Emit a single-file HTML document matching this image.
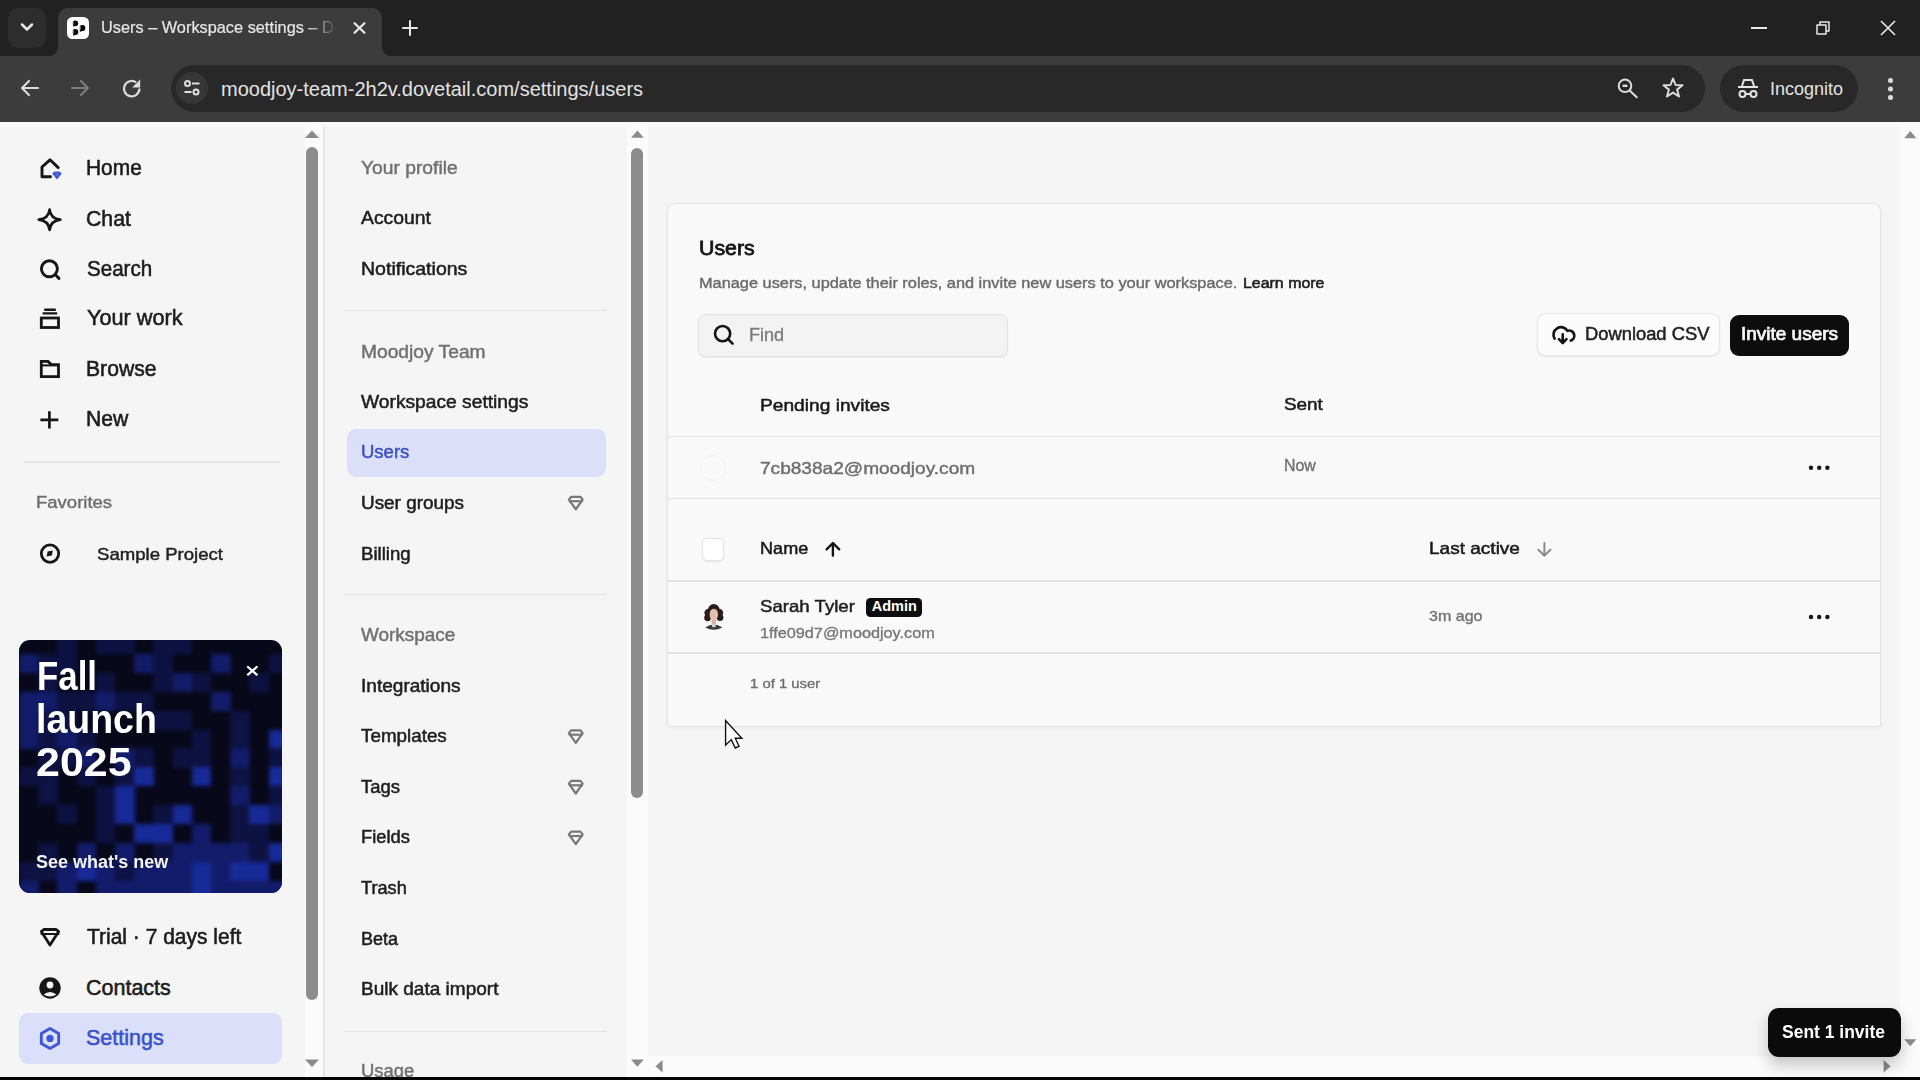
<!DOCTYPE html>
<html><head><meta charset="utf-8">
<style>
*{box-sizing:border-box;margin:0;padding:0}
html,body{width:1920px;height:1080px;overflow:hidden;background:#f5f5f5;font-family:"Liberation Sans",sans-serif;position:relative}
.a{position:absolute}
.t{position:absolute;white-space:nowrap;line-height:1}
#tabbar{left:0;top:0;width:1920px;height:56px;background:#212121}
#toolbar{left:0;top:56px;width:1920px;height:66px;background:#3c3c3c}
</style></head>
<body>
<!-- ============ BROWSER CHROME ============ -->
<div id="tabbar" class="a"></div>
<div class="a" style="left:8px;top:8px;width:38px;height:40px;border-radius:10px;background:#2d2d2d"></div>
<svg class="a" style="left:19px;top:21px" width="16" height="12" viewBox="0 0 16 12"><path d="M3 3.5 L8 8.5 L13 3.5" fill="none" stroke="#e8e8e8" stroke-width="2.5" stroke-linecap="round" stroke-linejoin="round"/></svg>
<!-- active tab -->
<div class="a" style="left:58px;top:8px;width:324px;height:48px;background:#3c3c3c;border-radius:10px 10px 0 0"></div>
<div class="a" style="left:48px;top:46px;width:10px;height:10px;background:radial-gradient(circle at 0 0,#212121 10px,#3c3c3c 10.5px)"></div>
<div class="a" style="left:382px;top:46px;width:10px;height:10px;background:radial-gradient(circle at 100% 0,#212121 10px,#3c3c3c 10.5px)"></div>
<div class="a" style="left:67px;top:16.8px;width:22.4px;height:22.4px;background:#fff;border-radius:5.5px"></div>
<svg class="a" style="left:60px;top:10px" width="36" height="36" viewBox="60 10 36 36"><g fill="#0a0a0a"><circle cx="75.3" cy="23.3" r="2.9"/><path d="M72.5 23.6 L73.2 26.6 L75.6 26.1Z"/><circle cx="82.3" cy="28" r="3.1"/><path d="M79.3 28.4 L80 31.8 L82.4 31.1Z"/><circle cx="75.3" cy="31.9" r="3"/><path d="M72.4 32.3 L73.6 35.8 L75.8 34.8Z"/></g><path d="M72.6 21.5 Q73.4 23.5 72.6 25.5" stroke="#fff" stroke-width="1.1" fill="none"/><path d="M79.6 26 Q80.4 28 79.6 30" stroke="#fff" stroke-width="1.1" fill="none"/><path d="M72.6 30 Q73.4 32 72.6 34" stroke="#fff" stroke-width="1.1" fill="none"/></svg>
<div class="a" style="left:100px;top:14px;width:236px;height:28px;overflow:hidden;-webkit-mask-image:linear-gradient(90deg,#000 205px,rgba(0,0,0,0.35) 228px,transparent 236px)"><div class="t" style="left:1px;top:5px;font-size:17px;color:#e6e6e6;transform:scaleX(0.96);transform-origin:0 0;-webkit-text-stroke:0.2px #e6e6e6">Users – Workspace settings – Dovetail</div></div>
<svg class="a" style="left:351px;top:20px" width="16" height="16" viewBox="0 0 16 16"><path d="M3.5 3.2 L13.5 12.8 M13.5 3.2 L3.5 12.8" stroke="#e8e8e8" stroke-width="2.2" stroke-linecap="round"/></svg>
<svg class="a" style="left:401px;top:19px" width="18" height="18" viewBox="0 0 18 18"><path d="M9 2 V16 M2 9 H16" stroke="#e8e8e8" stroke-width="2" stroke-linecap="round"/></svg>
<!-- window controls -->
<div class="a" style="left:1751px;top:27px;width:16px;height:1.5px;background:#e8e8e8"></div>
<svg class="a" style="left:1814px;top:19px" width="18" height="18" viewBox="0 0 18 18"><path d="M3 6 H12 V15 H3 Z M6 6 V3 H15 V12 H12" fill="none" stroke="#e8e8e8" stroke-width="1.5" stroke-linejoin="round"/></svg>
<svg class="a" style="left:1879px;top:19px" width="18" height="18" viewBox="0 0 18 18"><path d="M2 2 L16 16 M16 2 L2 16" stroke="#e8e8e8" stroke-width="1.6"/></svg>
<div id="toolbar" class="a"></div>
<svg class="a" style="left:18px;top:76px" width="24" height="24" viewBox="0 0 24 24"><path d="M20 12 H5 M11 5 L4 12 L11 19" fill="none" stroke="#dcdcdc" stroke-width="2.2" stroke-linecap="round" stroke-linejoin="round"/></svg>
<svg class="a" style="left:68px;top:76px" width="24" height="24" viewBox="0 0 24 24"><path d="M4 12 H19 M13 5 L20 12 L13 19" fill="none" stroke="#7d7d7d" stroke-width="2.2" stroke-linecap="round" stroke-linejoin="round"/></svg>
<svg class="a" style="left:116px;top:74px" width="30" height="30" viewBox="116 74 30 30"><path d="M139.4 88.6 A7.7 7.7 0 1 1 136.2 82.4" fill="none" stroke="#dcdcdc" stroke-width="2.2" stroke-linecap="butt"/><path d="M140.2 79.6 V87.6 H132.2 Z" fill="#dcdcdc"/></svg>
<div class="a" style="left:171px;top:64.5px;width:1534px;height:47px;border-radius:23.5px;background:#282828"></div>
<div class="a" style="left:176px;top:72px;width:32px;height:32px;border-radius:16px;background:#363636"></div>
<svg class="a" style="left:180px;top:76px" width="24" height="24" viewBox="0 0 24 24"><g fill="none" stroke="#e0e0e0" stroke-width="2"><circle cx="7.5" cy="7.5" r="2.5"/><circle cx="16" cy="16" r="2.5"/><path d="M12 7.5 H19.5 M4.5 16 H11.5"/></g></svg>
<div class="t" style="left:221px;top:79px;font-size:20px;color:#e3e3e3">moodjoy-team-2h2v.dovetail.com/settings/users</div>
<svg class="a" style="left:1610px;top:72px" width="34" height="34" viewBox="1610 72 34 34"><g fill="none" stroke="#dcdcdc" stroke-width="2"><circle cx="1625" cy="85.8" r="6.3"/><path d="M1629.6 90.4 L1636.8 97.2" stroke-linecap="round"/><path d="M1622.6 85.8 H1627.4" stroke-width="2.4"/></g></svg>
<svg class="a" style="left:1661px;top:76px" width="24" height="24" viewBox="0 0 24 24"><path d="M12 2.5 L14.6 9 L21.5 9.3 L16.1 13.6 L18 20.5 L12 16.6 L6 20.5 L7.9 13.6 L2.5 9.3 L9.4 9 Z" fill="none" stroke="#dcdcdc" stroke-width="2" stroke-linejoin="round"/></svg>
<div class="a" style="left:1720px;top:64.5px;width:138px;height:47px;border-radius:23.5px;background:#282828"></div>
<svg class="a" style="left:1736px;top:77px" width="24" height="24" viewBox="0 0 24 24"><g fill="none" stroke="#e3e3e3" stroke-width="2"><path d="M6 9 L8 3 H16 L18 9" /><path d="M2 10 H22"/><circle cx="6.5" cy="17" r="3"/><circle cx="17.5" cy="17" r="3"/><path d="M9.5 17 H14.5"/></g></svg>
<div class="t" style="left:1770px;top:80px;font-size:18px;color:#e3e3e3">Incognito</div>
<div class="a" style="left:1888px;top:78px;width:4.5px;height:4.5px;border-radius:50%;background:#dcdcdc;box-shadow:0 8.5px 0 #dcdcdc,0 17px 0 #dcdcdc"></div>


<!-- ============ LEFT SIDEBAR ============ -->
<div class="a" style="left:0;top:122px;width:305px;height:955px;background:#f5f5f5"></div>
<div class="a" style="left:24px;top:461px;width:256px;height:2px;background:#e4e4e4"></div>
<div class="a" style="left:19px;top:1013px;width:263px;height:51px;border-radius:9px;background:#dcdff9"></div>
<svg class="a" style="left:0;top:0" width="330" height="1080" viewBox="0 0 330 1080">
<g fill="none" stroke="#161616" stroke-width="2.9" stroke-linejoin="round" stroke-linecap="round">
<path d="M50.5 176.7 H42 V167 L50 159.8 L58.2 167.6"/>
<path d="M49.6 209.6 Q50.6 218.6 60.4 219.6 Q50.6 220.6 49.6 229.8 Q48.6 220.6 38.8 219.6 Q48.6 218.6 49.6 209.6 Z" stroke-width="2.7"/>
<circle cx="49.4" cy="268.8" r="8"/>
<path d="M55.4 274.8 L59 278.4"/>
<rect x="41.3" y="318" width="17.2" height="9.5" stroke-linejoin="miter" stroke-linecap="butt" stroke-width="2.8"/>
<path d="M42.6 313.4 H57.2 M44.2 309.7 H55.8" stroke-linecap="butt" stroke-width="2.4"/>
<path d="M41.3 361.4 H48 L51.2 364.6 H58.5 V376.7 H41.3 Z" stroke-linejoin="miter" stroke-width="2.8"/>
<path d="M41.2 365.4 H58.6" stroke-width="2" stroke-linecap="butt"/>
<path d="M49.4 411.2 V428.4 M40.4 419.8 H58.4" stroke-linecap="butt" stroke-width="2.7"/>
<circle cx="50" cy="553.6" r="8.7" stroke-width="2.8"/>
<path d="M41.3 931.6 L43.8 929.5 H56.2 L58.7 931.6 L50 945 Z" stroke-width="2.8"/>
<path d="M41.5 934 H58.5" stroke-width="2.2"/>
</g>
<path d="M53 173.6 L54.6 172.2 H59.4 L61 173.6 L57 178.6 Z" fill="#3f5ad6" stroke="#3f5ad6" stroke-width="1.2" stroke-linejoin="round"/>
<path d="M56 174.3 H58 L57 175.8 Z" fill="#8fa0ee"/>
<path d="M46.6 556.6 L47.6 551.6 L52.8 550.6 L51.8 555.6 Z" fill="#161616"/>
<circle cx="50" cy="988" r="10.7" fill="#161616"/>
<circle cx="50" cy="985" r="3.4" fill="#f5f5f5"/>
<path d="M43.6 994.6 Q50 989.2 56.4 994.6 Q50 998.6 43.6 994.6 Z" fill="#f5f5f5"/>
<path d="M50 1028.4 L58.66 1033.4 V1043.4 L50 1048.4 L41.34 1043.4 V1033.4 Z" fill="none" stroke="#3f57d6" stroke-width="2.9" stroke-linejoin="round"/>
<circle cx="50" cy="1038.4" r="3.6" fill="#3f57d6"/>
</svg>
<div class="a" style="left:19px;top:640px;width:263px;height:253px;border-radius:11px;overflow:hidden;background:#08081a"><div class="a" style="left:0;top:0;width:263px;height:253px;filter:blur(2px)">
<div class="a" style="left:38.4px;top:-5.0px;width:19.5px;height:19.2px;background:#0e1242"></div>
<div class="a" style="left:76.8px;top:-5.0px;width:19.5px;height:19.2px;background:#0e1242"></div>
<div class="a" style="left:96.0px;top:-5.0px;width:19.5px;height:19.2px;background:#0e1242"></div>
<div class="a" style="left:134.4px;top:-5.0px;width:19.5px;height:19.2px;background:#0e1242"></div>
<div class="a" style="left:153.6px;top:-5.0px;width:19.5px;height:19.2px;background:#0e1242"></div>
<div class="a" style="left:0.0px;top:13.9px;width:19.5px;height:19.2px;background:#121c6a"></div>
<div class="a" style="left:19.2px;top:13.9px;width:19.5px;height:19.2px;background:#0e1242"></div>
<div class="a" style="left:38.4px;top:13.9px;width:19.5px;height:19.2px;background:#0e1242"></div>
<div class="a" style="left:115.2px;top:13.9px;width:19.5px;height:19.2px;background:#121c6a"></div>
<div class="a" style="left:134.4px;top:13.9px;width:19.5px;height:19.2px;background:#0e1242"></div>
<div class="a" style="left:192.0px;top:13.9px;width:19.5px;height:19.2px;background:#121c6a"></div>
<div class="a" style="left:249.6px;top:13.9px;width:19.5px;height:19.2px;background:#0e1242"></div>
<div class="a" style="left:19.2px;top:32.8px;width:19.5px;height:19.2px;background:#0e1242"></div>
<div class="a" style="left:76.8px;top:32.8px;width:19.5px;height:19.2px;background:#0e1242"></div>
<div class="a" style="left:134.4px;top:32.8px;width:19.5px;height:19.2px;background:#0e1242"></div>
<div class="a" style="left:153.6px;top:32.8px;width:19.5px;height:19.2px;background:#121c6a"></div>
<div class="a" style="left:172.8px;top:32.8px;width:19.5px;height:19.2px;background:#0e1242"></div>
<div class="a" style="left:230.4px;top:32.8px;width:19.5px;height:19.2px;background:#0e1242"></div>
<div class="a" style="left:0.0px;top:51.7px;width:19.5px;height:19.2px;background:#121c6a"></div>
<div class="a" style="left:19.2px;top:51.7px;width:19.5px;height:19.2px;background:#121c6a"></div>
<div class="a" style="left:38.4px;top:51.7px;width:19.5px;height:19.2px;background:#0e1242"></div>
<div class="a" style="left:57.6px;top:51.7px;width:19.5px;height:19.2px;background:#0e1242"></div>
<div class="a" style="left:76.8px;top:51.7px;width:19.5px;height:19.2px;background:#121c6a"></div>
<div class="a" style="left:96.0px;top:51.7px;width:19.5px;height:19.2px;background:#0e1242"></div>
<div class="a" style="left:115.2px;top:51.7px;width:19.5px;height:19.2px;background:#0e1242"></div>
<div class="a" style="left:192.0px;top:51.7px;width:19.5px;height:19.2px;background:#121c6a"></div>
<div class="a" style="left:0.0px;top:70.6px;width:19.5px;height:19.2px;background:#121c6a"></div>
<div class="a" style="left:19.2px;top:70.6px;width:19.5px;height:19.2px;background:#0e1242"></div>
<div class="a" style="left:38.4px;top:70.6px;width:19.5px;height:19.2px;background:#0e1242"></div>
<div class="a" style="left:134.4px;top:70.6px;width:19.5px;height:19.2px;background:#0e1242"></div>
<div class="a" style="left:153.6px;top:70.6px;width:19.5px;height:19.2px;background:#0e1242"></div>
<div class="a" style="left:211.2px;top:70.6px;width:19.5px;height:19.2px;background:#0e1242"></div>
<div class="a" style="left:0.0px;top:89.5px;width:19.5px;height:19.2px;background:#121c6a"></div>
<div class="a" style="left:19.2px;top:89.5px;width:19.5px;height:19.2px;background:#0e1242"></div>
<div class="a" style="left:38.4px;top:89.5px;width:19.5px;height:19.2px;background:#121c6a"></div>
<div class="a" style="left:57.6px;top:89.5px;width:19.5px;height:19.2px;background:#0e1242"></div>
<div class="a" style="left:172.8px;top:89.5px;width:19.5px;height:19.2px;background:#0e1242"></div>
<div class="a" style="left:211.2px;top:89.5px;width:19.5px;height:19.2px;background:#0e1242"></div>
<div class="a" style="left:249.6px;top:89.5px;width:19.5px;height:19.2px;background:#172a98"></div>
<div class="a" style="left:19.2px;top:108.4px;width:19.5px;height:19.2px;background:#0e1242"></div>
<div class="a" style="left:38.4px;top:108.4px;width:19.5px;height:19.2px;background:#0e1242"></div>
<div class="a" style="left:57.6px;top:108.4px;width:19.5px;height:19.2px;background:#121c6a"></div>
<div class="a" style="left:96.0px;top:108.4px;width:19.5px;height:19.2px;background:#121c6a"></div>
<div class="a" style="left:115.2px;top:108.4px;width:19.5px;height:19.2px;background:#0e1242"></div>
<div class="a" style="left:153.6px;top:108.4px;width:19.5px;height:19.2px;background:#0e1242"></div>
<div class="a" style="left:172.8px;top:108.4px;width:19.5px;height:19.2px;background:#0e1242"></div>
<div class="a" style="left:211.2px;top:108.4px;width:19.5px;height:19.2px;background:#121c6a"></div>
<div class="a" style="left:249.6px;top:108.4px;width:19.5px;height:19.2px;background:#0e1242"></div>
<div class="a" style="left:0.0px;top:127.3px;width:19.5px;height:19.2px;background:#0e1242"></div>
<div class="a" style="left:19.2px;top:127.3px;width:19.5px;height:19.2px;background:#0e1242"></div>
<div class="a" style="left:57.6px;top:127.3px;width:19.5px;height:19.2px;background:#0e1242"></div>
<div class="a" style="left:96.0px;top:127.3px;width:19.5px;height:19.2px;background:#0e1242"></div>
<div class="a" style="left:115.2px;top:127.3px;width:19.5px;height:19.2px;background:#172a98"></div>
<div class="a" style="left:172.8px;top:127.3px;width:19.5px;height:19.2px;background:#172a98"></div>
<div class="a" style="left:211.2px;top:127.3px;width:19.5px;height:19.2px;background:#0e1242"></div>
<div class="a" style="left:249.6px;top:127.3px;width:19.5px;height:19.2px;background:#172a98"></div>
<div class="a" style="left:19.2px;top:146.2px;width:19.5px;height:19.2px;background:#0e1242"></div>
<div class="a" style="left:76.8px;top:146.2px;width:19.5px;height:19.2px;background:#0e1242"></div>
<div class="a" style="left:96.0px;top:146.2px;width:19.5px;height:19.2px;background:#172a98"></div>
<div class="a" style="left:211.2px;top:146.2px;width:19.5px;height:19.2px;background:#121c6a"></div>
<div class="a" style="left:249.6px;top:146.2px;width:19.5px;height:19.2px;background:#0e1242"></div>
<div class="a" style="left:38.4px;top:165.1px;width:19.5px;height:19.2px;background:#0e1242"></div>
<div class="a" style="left:76.8px;top:165.1px;width:19.5px;height:19.2px;background:#0e1242"></div>
<div class="a" style="left:96.0px;top:165.1px;width:19.5px;height:19.2px;background:#172a98"></div>
<div class="a" style="left:134.4px;top:165.1px;width:19.5px;height:19.2px;background:#0e1242"></div>
<div class="a" style="left:153.6px;top:165.1px;width:19.5px;height:19.2px;background:#172a98"></div>
<div class="a" style="left:211.2px;top:165.1px;width:19.5px;height:19.2px;background:#0e1242"></div>
<div class="a" style="left:230.4px;top:165.1px;width:19.5px;height:19.2px;background:#172a98"></div>
<div class="a" style="left:249.6px;top:165.1px;width:19.5px;height:19.2px;background:#121c6a"></div>
<div class="a" style="left:76.8px;top:184.0px;width:19.5px;height:19.2px;background:#0e1242"></div>
<div class="a" style="left:115.2px;top:184.0px;width:19.5px;height:19.2px;background:#172a98"></div>
<div class="a" style="left:134.4px;top:184.0px;width:19.5px;height:19.2px;background:#172a98"></div>
<div class="a" style="left:172.8px;top:184.0px;width:19.5px;height:19.2px;background:#121c6a"></div>
<div class="a" style="left:211.2px;top:184.0px;width:19.5px;height:19.2px;background:#0e1242"></div>
<div class="a" style="left:230.4px;top:184.0px;width:19.5px;height:19.2px;background:#0e1242"></div>
<div class="a" style="left:19.2px;top:202.9px;width:19.5px;height:19.2px;background:#0e1242"></div>
<div class="a" style="left:57.6px;top:202.9px;width:19.5px;height:19.2px;background:#121c6a"></div>
<div class="a" style="left:96.0px;top:202.9px;width:19.5px;height:19.2px;background:#121c6a"></div>
<div class="a" style="left:134.4px;top:202.9px;width:19.5px;height:19.2px;background:#0e1242"></div>
<div class="a" style="left:153.6px;top:202.9px;width:19.5px;height:19.2px;background:#121c6a"></div>
<div class="a" style="left:172.8px;top:202.9px;width:19.5px;height:19.2px;background:#121c6a"></div>
<div class="a" style="left:192.0px;top:202.9px;width:19.5px;height:19.2px;background:#121c6a"></div>
<div class="a" style="left:211.2px;top:202.9px;width:19.5px;height:19.2px;background:#121c6a"></div>
<div class="a" style="left:230.4px;top:202.9px;width:19.5px;height:19.2px;background:#0e1242"></div>
<div class="a" style="left:249.6px;top:202.9px;width:19.5px;height:19.2px;background:#172a98"></div>
<div class="a" style="left:0.0px;top:221.8px;width:19.5px;height:19.2px;background:#0e1242"></div>
<div class="a" style="left:19.2px;top:221.8px;width:19.5px;height:19.2px;background:#0e1242"></div>
<div class="a" style="left:38.4px;top:221.8px;width:19.5px;height:19.2px;background:#121c6a"></div>
<div class="a" style="left:57.6px;top:221.8px;width:19.5px;height:19.2px;background:#172a98"></div>
<div class="a" style="left:76.8px;top:221.8px;width:19.5px;height:19.2px;background:#121c6a"></div>
<div class="a" style="left:96.0px;top:221.8px;width:19.5px;height:19.2px;background:#0e1242"></div>
<div class="a" style="left:115.2px;top:221.8px;width:19.5px;height:19.2px;background:#121c6a"></div>
<div class="a" style="left:134.4px;top:221.8px;width:19.5px;height:19.2px;background:#121c6a"></div>
<div class="a" style="left:153.6px;top:221.8px;width:19.5px;height:19.2px;background:#121c6a"></div>
<div class="a" style="left:172.8px;top:221.8px;width:19.5px;height:19.2px;background:#172a98"></div>
<div class="a" style="left:192.0px;top:221.8px;width:19.5px;height:19.2px;background:#121c6a"></div>
<div class="a" style="left:211.2px;top:221.8px;width:19.5px;height:19.2px;background:#172a98"></div>
<div class="a" style="left:230.4px;top:221.8px;width:19.5px;height:19.2px;background:#172a98"></div>
<div class="a" style="left:0.0px;top:240.7px;width:19.5px;height:19.2px;background:#121c6a"></div>
<div class="a" style="left:38.4px;top:240.7px;width:19.5px;height:19.2px;background:#121c6a"></div>
<div class="a" style="left:76.8px;top:240.7px;width:19.5px;height:19.2px;background:#121c6a"></div>
<div class="a" style="left:96.0px;top:240.7px;width:19.5px;height:19.2px;background:#121c6a"></div>
<div class="a" style="left:115.2px;top:240.7px;width:19.5px;height:19.2px;background:#121c6a"></div>
<div class="a" style="left:134.4px;top:240.7px;width:19.5px;height:19.2px;background:#121c6a"></div>
<div class="a" style="left:153.6px;top:240.7px;width:19.5px;height:19.2px;background:#121c6a"></div>
<div class="a" style="left:172.8px;top:240.7px;width:19.5px;height:19.2px;background:#172a98"></div>
<div class="a" style="left:192.0px;top:240.7px;width:19.5px;height:19.2px;background:#121c6a"></div>
<div class="a" style="left:211.2px;top:240.7px;width:19.5px;height:19.2px;background:#121c6a"></div>
<div class="a" style="left:230.4px;top:240.7px;width:19.5px;height:19.2px;background:#121c6a"></div>
<div class="a" style="left:249.6px;top:240.7px;width:19.5px;height:19.2px;background:#121c6a"></div>
</div></div>
<svg class="a" style="left:240px;top:660px" width="24" height="24" viewBox="240 660 24 24"><path d="M248 667 L256.7 674.6 M256.7 667 L248 674.6" stroke="#fff" stroke-width="2.3" stroke-linecap="round"/></svg>
<!-- scrollbar 1 -->
<div class="a" style="left:305px;top:122px;width:18px;height:955px;background:#fbfbfb"></div>
<svg class="a" style="left:304px;top:124px" width="18" height="18" viewBox="304 124 18 18"><path d="M305 138 L312 130.5 L319 138 Z" fill="#8a8a8a"/></svg>
<div class="a" style="left:306px;top:147px;width:12.4px;height:853px;border-radius:6.2px;background:#8c8c8c"></div>
<svg class="a" style="left:304px;top:1054px" width="18" height="18" viewBox="304 1054 18 18"><path d="M305 1059.5 L312 1067 L319 1059.5 Z" fill="#8a8a8a"/></svg>
<div class="a" style="left:323px;top:122px;width:2px;height:955px;background:#e4e4e4"></div>
<!-- ============ SETTINGS NAV ============ -->
<div class="a" style="left:325px;top:122px;width:302px;height:955px;background:#f5f5f5"></div>
<div class="a" style="left:344px;top:309.5px;width:263px;height:1.6px;background:#e3e3e3"></div>
<div class="a" style="left:344px;top:593.5px;width:263px;height:1.6px;background:#e3e3e3"></div>
<div class="a" style="left:344px;top:1030.5px;width:263px;height:1.6px;background:#e3e3e3"></div>
<div class="a" style="left:346.5px;top:428.8px;width:259px;height:48px;border-radius:9px;background:#dcdff9"></div>
<svg class="a" style="left:0;top:0" width="660" height="1080" viewBox="0 0 660 1080"><g fill="none" stroke="#787878" stroke-width="2.2" stroke-linejoin="round"><path d="M568.9 499.6 L571.2 496.8 H580.4 L582.7 499.6 L575.8 509.4 Z"/><path d="M568.8 501.2 H582.8"/><path d="M568.9 733.1 L571.2 730.3 H580.4 L582.7 733.1 L575.8 742.9 Z"/><path d="M568.8 734.7 H582.8"/><path d="M568.9 783.7 L571.2 780.9 H580.4 L582.7 783.7 L575.8 793.5 Z"/><path d="M568.8 785.3 H582.8"/><path d="M568.9 834.4 L571.2 831.6 H580.4 L582.7 834.4 L575.8 844.2 Z"/><path d="M568.8 836.0 H582.8"/></g></svg>
<div class="a" style="left:627px;top:122px;width:21px;height:955px;background:#fbfbfb"></div>
<svg class="a" style="left:626px;top:124px" width="22" height="18" viewBox="626 124 22 18"><path d="M631 137.8 L637.4 130.6 L643.8 137.8 Z" fill="#8a8a8a"/></svg>
<div class="a" style="left:631px;top:147.5px;width:12.4px;height:650px;border-radius:6.2px;background:#8c8c8c"></div>
<svg class="a" style="left:626px;top:1054px" width="22" height="18" viewBox="626 1054 22 18"><path d="M631 1059.5 L637.4 1066.7 L643.8 1059.5 Z" fill="#8a8a8a"/></svg>
<!-- ============ MAIN ============ -->
<div class="a" style="left:0;top:122px;width:1920px;height:5px;background:#f9f9f9"></div>
<div class="a" style="left:667px;top:202.5px;width:1214px;height:524px;border:1.5px solid #e3e3e3;border-radius:8px 8px 3px 3px;background:#f9f9f9;box-shadow:0 2px 4px rgba(0,0,0,0.035)"></div>
<!-- find input -->
<div class="a" style="left:697.5px;top:313.5px;width:310px;height:43px;border:1px solid #e2e2e2;border-radius:8px;background:#f3f3f3;box-shadow:0 1px 1.5px rgba(0,0,0,0.06)"></div>
<!-- download csv -->
<div class="a" style="left:1537px;top:312.7px;width:183px;height:43.8px;border:1px solid #e6e6e6;border-radius:8px;background:#fbfbfb;box-shadow:0 1px 2px rgba(0,0,0,0.08)"></div>
<!-- invite users -->
<div class="a" style="left:1730.2px;top:315.3px;width:118.5px;height:40.4px;border-radius:9px;background:#0d0d0d"></div>
<!-- rows -->
<div class="a" style="left:668px;top:435.7px;width:1212px;height:1.6px;background:#e2e2e2"></div>
<div class="a" style="left:668px;top:497.9px;width:1212px;height:1.6px;background:#e2e2e2"></div>
<div class="a" style="left:668px;top:580px;width:1212px;height:1.6px;background:#e2e2e2"></div>
<div class="a" style="left:668px;top:652.2px;width:1212px;height:1.6px;background:#e2e2e2"></div>
<div class="a" style="left:699.5px;top:454.5px;width:26px;height:26px;border-radius:50%;border:1.2px solid #efefef"></div>
<div class="a" style="left:701.7px;top:538.3px;width:22.5px;height:22.5px;border-radius:5px;border:1px solid #e3e3e3;background:#fff;box-shadow:0 1px 2px rgba(0,0,0,0.08)"></div>
<div class="a" style="left:865.8px;top:598px;width:56px;height:18.8px;border-radius:4.5px;background:#0d0d0d"></div>
<svg class="a" style="left:640px;top:300px" width="1280" height="460" viewBox="640 300 1280 460">
<g fill="none" stroke="#151515" stroke-width="2.6" stroke-linecap="round" stroke-linejoin="round">
<circle cx="722.6" cy="333.6" r="7.6"/>
<path d="M728.2 339.3 L732.6 343.6"/>
<path d="M1554.6 338.6 A7.3 7.3 0 1 1 1567.4 330.8 A4.7 4.7 0 0 1 1570.8 340.6" stroke-width="2.7"/>
<path d="M1562.7 334.4 V342.6 M1558.9 339.2 L1562.7 343 L1566.5 339.2" stroke-width="2.6"/>
<path d="M832.9 543.2 V555.6 M826.6 549.3 L832.9 543 L839.2 549.3" stroke-width="2.4"/>
</g>
<path d="M1544.4 543 V555.6 M1538.4 549.8 L1544.4 555.8 L1550.4 549.8" fill="none" stroke="#8a8a8a" stroke-width="2" stroke-linecap="round" stroke-linejoin="round"/>
<g fill="#151515">
<circle cx="1811" cy="467.8" r="2.2"/><circle cx="1819.2" cy="467.8" r="2.2"/><circle cx="1827.4" cy="467.8" r="2.2"/>
<circle cx="1811" cy="617" r="2.2"/><circle cx="1819.2" cy="617" r="2.2"/><circle cx="1827.4" cy="617" r="2.2"/>
</g>
<!-- avatar -->
<g fill="#2a1c1c"><circle cx="713.8" cy="609.8" r="5.8"/><circle cx="708.6" cy="613" r="4.2"/><circle cx="719" cy="613" r="4.2"/><circle cx="707.6" cy="617.8" r="3.4"/><circle cx="720" cy="617.6" r="3.4"/></g>
<path d="M711.6 619.5 h4.4 v4.6 h-4.4z" fill="#dcb39d"/>
<ellipse cx="713.8" cy="614.6" rx="4.2" ry="6" fill="#e4bfab"/>
<path d="M709.2 610.4 Q713.8 606.2 718.4 610.4 Q716 608.6 713.8 609.2 Q711.6 608.6 709.2 610.4Z" fill="#2a1c1c"/>
<path d="M705.2 627.4 Q713.8 621.4 722.4 627.4 Q713.8 632 705.2 627.4 Z" fill="#3a3a3a"/>
<path d="M711.4 624.2 H716.2 L715.2 627.2 H712.4 Z" fill="#d4d4d4"/>
</svg>
<!-- cursor -->
<svg class="a" style="left:720px;top:715px" width="30" height="40" viewBox="720 715 30 40"><path d="M725.6 720.6 V745.2 L731.3 739.6 L735.3 748 L739 746.3 L735.3 738.2 L741.8 738.2 Z" fill="#fff" stroke="#111" stroke-width="1.4" stroke-linejoin="miter"/></svg>
<!-- right scrollbar -->
<div class="a" style="left:1900px;top:122px;width:20px;height:955px;background:#fbfbfb"></div>
<svg class="a" style="left:1900px;top:124px" width="20" height="18" viewBox="1900 124 20 18"><path d="M1904.2 138.2 L1910.3 131 L1916.4 138.2 Z" fill="#8a8a8a"/></svg>
<svg class="a" style="left:1900px;top:1034px" width="20" height="18" viewBox="1900 1034 20 18"><path d="M1904.2 1039.2 L1910.3 1046.2 L1916.4 1039.2 Z" fill="#8a8a8a"/></svg>
<!-- horizontal scrollbar -->
<div class="a" style="left:648px;top:1056px;width:1272px;height:21px;background:#fbfbfb"></div>
<svg class="a" style="left:650px;top:1056px" width="16" height="20" viewBox="650 1056 16 20"><path d="M662.6 1060 L655.5 1066.2 L662.6 1072.4 Z" fill="#8a8a8a"/></svg>
<svg class="a" style="left:1878px;top:1056px" width="16" height="20" viewBox="1878 1056 16 20"><path d="M1883.6 1060 L1890.6 1066.2 L1883.6 1072.4 Z" fill="#8a8a8a"/></svg>
<!-- toast -->
<div class="a" style="left:1767.5px;top:1007.5px;width:133px;height:49.5px;border-radius:11px;background:#0b0b0b;box-shadow:0 8px 16px rgba(0,0,0,0.22)"></div>
<div class="t" style="left:86.00px;top:158.29px;font-size:21.51px;color:#1c1c1c;-webkit-text-stroke:0.55px #1c1c1c;transform:scaleX(0.9724);transform-origin:0.00px 0;">Home</div>
<div class="t" style="left:86.00px;top:208.69px;font-size:21.51px;color:#1c1c1c;-webkit-text-stroke:0.55px #1c1c1c;transform:scaleX(0.9902);transform-origin:0.00px 0;">Chat</div>
<div class="t" style="left:86.70px;top:259.29px;font-size:21.51px;color:#1c1c1c;-webkit-text-stroke:0.55px #1c1c1c;transform:scaleX(0.9566);transform-origin:0.00px 0;">Search</div>
<div class="t" style="left:87.00px;top:308.29px;font-size:21.51px;color:#1c1c1c;-webkit-text-stroke:0.55px #1c1c1c;transform:scaleX(1.0075);transform-origin:0.00px 0;">Your work</div>
<div class="t" style="left:86.00px;top:359.29px;font-size:21.51px;color:#1c1c1c;-webkit-text-stroke:0.55px #1c1c1c;transform:scaleX(0.9842);transform-origin:0.00px 0;">Browse</div>
<div class="t" style="left:86.00px;top:408.69px;font-size:21.51px;color:#1c1c1c;-webkit-text-stroke:0.55px #1c1c1c;transform:scaleX(0.9861);transform-origin:0.00px 0;">New</div>
<div class="t" style="left:35.90px;top:494.82px;font-size:16.86px;color:#6e6e6e;-webkit-text-stroke:0.4px #6e6e6e;transform:scaleX(1.0975);transform-origin:0.00px 0;">Favorites</div>
<div class="t" style="left:96.60px;top:545.58px;font-size:17.15px;color:#222;-webkit-text-stroke:0.45px #222;transform:scaleX(1.0842);transform-origin:0.00px 0;">Sample Project</div>
<div class="t" style="left:87.00px;top:927.21px;font-size:21.37px;color:#1c1c1c;-webkit-text-stroke:0.55px #1c1c1c;transform:scaleX(0.9826);transform-origin:0.00px 0;">Trial · 7 days left</div>
<div class="t" style="left:86.00px;top:977.79px;font-size:21.51px;color:#1c1c1c;-webkit-text-stroke:0.55px #1c1c1c;">Contacts</div>
<div class="t" style="left:86.00px;top:1028.19px;font-size:21.51px;color:#3a51cb;-webkit-text-stroke:0.55px #3a51cb;">Settings</div>
<div class="t" style="left:36.60px;top:656.13px;font-size:40.00px;color:#fff;font-weight:bold;transform:scaleX(0.8708);transform-origin:0.00px 0;">Fall</div>
<div class="t" style="left:36.00px;top:699.13px;font-size:40.00px;color:#fff;font-weight:bold;transform:scaleX(0.9372);transform-origin:0.00px 0;">launch</div>
<div class="t" style="left:35.90px;top:742.13px;font-size:40.00px;color:#fff;font-weight:bold;transform:scaleX(1.0744);transform-origin:0.00px 0;">2025</div>
<div class="t" style="left:35.90px;top:852.51px;font-size:18.30px;color:#f4f4f4;font-weight:bold;transform:scaleX(0.9838);transform-origin:0.00px 0;">See what's new</div>
<div class="t" style="left:361.00px;top:160.13px;font-size:17.44px;color:#717171;-webkit-text-stroke:0.45px #717171;transform:scaleX(1.1040);transform-origin:0.00px 0;">Your profile</div>
<div class="t" style="left:361.00px;top:210.43px;font-size:17.44px;color:#1e1e1e;-webkit-text-stroke:0.5px #1e1e1e;transform:scaleX(1.1106);transform-origin:0.00px 0;">Account</div>
<div class="t" style="left:361.00px;top:261.33px;font-size:17.44px;color:#1e1e1e;-webkit-text-stroke:0.5px #1e1e1e;transform:scaleX(1.1199);transform-origin:0.00px 0;">Notifications</div>
<div class="t" style="left:361.00px;top:343.53px;font-size:17.44px;color:#717171;-webkit-text-stroke:0.45px #717171;transform:scaleX(1.1016);transform-origin:0.00px 0;">Moodjoy Team</div>
<div class="t" style="left:361.00px;top:393.93px;font-size:17.44px;color:#1e1e1e;-webkit-text-stroke:0.5px #1e1e1e;transform:scaleX(1.1022);transform-origin:0.00px 0;">Workspace settings</div>
<div class="t" style="left:361.00px;top:444.13px;font-size:17.44px;color:#3b50c4;-webkit-text-stroke:0.45px #3b50c4;transform:scaleX(1.0604);transform-origin:0.00px 0;">Users</div>
<div class="t" style="left:361.00px;top:494.63px;font-size:17.44px;color:#1e1e1e;-webkit-text-stroke:0.5px #1e1e1e;transform:scaleX(1.0841);transform-origin:0.00px 0;">User groups</div>
<div class="t" style="left:361.00px;top:545.73px;font-size:17.44px;color:#1e1e1e;-webkit-text-stroke:0.5px #1e1e1e;transform:scaleX(1.0680);transform-origin:0.00px 0;">Billing</div>
<div class="t" style="left:361.00px;top:627.13px;font-size:17.44px;color:#717171;-webkit-text-stroke:0.45px #717171;transform:scaleX(1.0860);transform-origin:0.00px 0;">Workspace</div>
<div class="t" style="left:361.00px;top:677.73px;font-size:17.44px;color:#1e1e1e;-webkit-text-stroke:0.5px #1e1e1e;transform:scaleX(1.0928);transform-origin:0.00px 0;">Integrations</div>
<div class="t" style="left:361.00px;top:728.33px;font-size:17.44px;color:#1e1e1e;-webkit-text-stroke:0.5px #1e1e1e;transform:scaleX(1.0794);transform-origin:0.00px 0;">Templates</div>
<div class="t" style="left:361.00px;top:778.73px;font-size:17.44px;color:#1e1e1e;-webkit-text-stroke:0.5px #1e1e1e;transform:scaleX(1.0585);transform-origin:0.00px 0;">Tags</div>
<div class="t" style="left:361.00px;top:828.73px;font-size:17.44px;color:#1e1e1e;-webkit-text-stroke:0.5px #1e1e1e;transform:scaleX(1.0532);transform-origin:0.00px 0;">Fields</div>
<div class="t" style="left:361.40px;top:880.33px;font-size:17.44px;color:#1e1e1e;-webkit-text-stroke:0.5px #1e1e1e;transform:scaleX(1.0424);transform-origin:0.00px 0;">Trash</div>
<div class="t" style="left:361.00px;top:930.83px;font-size:17.44px;color:#1e1e1e;-webkit-text-stroke:0.5px #1e1e1e;transform:scaleX(1.0310);transform-origin:0.00px 0;">Beta</div>
<div class="t" style="left:361.00px;top:981.13px;font-size:17.44px;color:#1e1e1e;-webkit-text-stroke:0.5px #1e1e1e;transform:scaleX(1.0910);transform-origin:0.00px 0;">Bulk data import</div>
<div class="t" style="left:361.00px;top:1062.73px;font-size:17.44px;color:#717171;-webkit-text-stroke:0.45px #717171;transform:scaleX(1.0572);transform-origin:0.00px 0;">Usage</div>
<div class="t" style="left:698.75px;top:237.64px;font-size:20.50px;color:#151515;-webkit-text-stroke:0.8px #151515;transform:scaleX(1.0395);transform-origin:0.00px 0;">Users</div>
<div class="t" style="left:698.75px;top:275.75px;font-size:14.83px;color:#6b6b6b;-webkit-text-stroke:0.4px #6b6b6b;transform:scaleX(1.1014);transform-origin:0.00px 0;">Manage users, update their roles, and invite new users to your workspace.</div>
<div class="t" style="left:1242.60px;top:275.95px;font-size:14.83px;color:#1f1f1f;-webkit-text-stroke:0.6px #1f1f1f;transform:scaleX(1.0736);transform-origin:0.00px 0;">Learn more</div>
<div class="t" style="left:749.30px;top:327.09px;font-size:17.73px;color:#7b7b7b;-webkit-text-stroke:0.35px #7b7b7b;transform:scaleX(1.0203);transform-origin:0.00px 0;">Find</div>
<div class="t" style="left:1585.00px;top:325.86px;font-size:17.88px;color:#222;-webkit-text-stroke:0.5px #222;transform:scaleX(1.0269);transform-origin:0.00px 0;">Download CSV</div>
<div class="t" style="left:1741.30px;top:325.86px;font-size:17.88px;color:#fafafa;-webkit-text-stroke:0.7px #fafafa;transform:scaleX(1.0621);transform-origin:0.00px 0;">Invite users</div>
<div class="t" style="left:759.70px;top:396.50px;font-size:17.01px;color:#1a1a1a;-webkit-text-stroke:0.5px #1a1a1a;transform:scaleX(1.1271);transform-origin:0.00px 0;">Pending invites</div>
<div class="t" style="left:1283.90px;top:396.36px;font-size:17.30px;color:#1a1a1a;-webkit-text-stroke:0.5px #1a1a1a;transform:scaleX(1.0933);transform-origin:0.00px 0;">Sent</div>
<div class="t" style="left:759.70px;top:460.02px;font-size:16.28px;color:#6e6e6e;-webkit-text-stroke:0.4px #6e6e6e;transform:scaleX(1.1724);transform-origin:0.00px 0;">7cb838a2@moodjoy.com</div>
<div class="t" style="left:1283.90px;top:458.06px;font-size:15.99px;color:#6f6f6f;-webkit-text-stroke:0.35px #6f6f6f;transform:scaleX(0.9959);transform-origin:0.00px 0;">Now</div>
<div class="t" style="left:759.70px;top:541.35px;font-size:16.72px;color:#1a1a1a;-webkit-text-stroke:0.5px #1a1a1a;transform:scaleX(1.0833);transform-origin:0.00px 0;">Name</div>
<div class="t" style="left:1428.80px;top:541.47px;font-size:16.57px;color:#1a1a1a;-webkit-text-stroke:0.5px #1a1a1a;transform:scaleX(1.1488);transform-origin:0.00px 0;">Last active</div>
<div class="t" style="left:759.70px;top:599.15px;font-size:16.72px;color:#1f1f1f;-webkit-text-stroke:0.5px #1f1f1f;transform:scaleX(1.1154);transform-origin:0.00px 0;">Sarah Tyler</div>
<div class="t" style="left:871.70px;top:599.49px;font-size:14.53px;color:#fff;font-weight:bold;">Admin</div>
<div class="t" style="left:760.00px;top:624.65px;font-size:15.41px;color:#777;-webkit-text-stroke:0.35px #777;transform:scaleX(1.0536);transform-origin:0.00px 0;">1ffe09d7@moodjoy.com</div>
<div class="t" style="left:1429.30px;top:609.02px;font-size:14.97px;color:#727272;-webkit-text-stroke:0.35px #727272;transform:scaleX(1.0714);transform-origin:0.00px 0;">3m ago</div>
<div class="t" style="left:749.70px;top:677.23px;font-size:13.66px;color:#6d6d6d;-webkit-text-stroke:0.35px #6d6d6d;transform:scaleX(1.0890);transform-origin:0.00px 0;">1 of 1 user</div>
<div class="t" style="left:1782.00px;top:1022.76px;font-size:18.00px;color:#fff;font-weight:bold;transform:scaleX(0.9714);transform-origin:0.00px 0;">Sent 1 invite</div>
<div class="a" style="left:0;top:1077px;width:1920px;height:3px;background:#050505"></div>
</body></html>
